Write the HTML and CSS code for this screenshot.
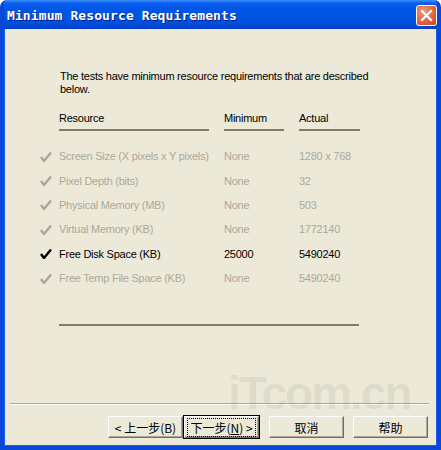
FILE: index.html
```html
<!DOCTYPE html>
<html lang="en">
<head>
  <meta charset="UTF-8">
  <title>Minimum Resource Requirements</title>
  <link rel="stylesheet" href="styles.css">
</head>
<body>
  <div class="window">
    <div class="titlebar">
      <span class="title">Minimum Resource Requirements</span>
      <button class="close-btn" aria-label="Close">
        <svg width="13" height="13" viewBox="0 0 13 13"><path d="M2 2 L11 11 M11 2 L2 11" stroke="#fff" stroke-width="2.2" stroke-linecap="square"/></svg>
      </button>
    </div>

    <div class="content">
      <p class="intro">The tests have minimum resource requirements that are described below.</p>

      <div class="grid head">
        <span></span>
        <span class="col-head wide">Resource</span>
        <span class="col-head mid">Minimum</span>
        <span class="col-head">Actual</span>
      </div>

      <div id="rows"></div>

      <div class="rule"></div>
    </div>

    <span class="watermark">iTcom.cn</span>

    <div class="separator"></div>
    <div class="footer">
      <button class="btn">&lt; 上一步(B)</button>
      <button class="btn default"><span class="focus">下一步(<u>N</u>) &gt;</span></button>
      <button class="btn gap">取消</button>
      <button class="btn gap-sm">帮助</button>
    </div>
  </div>

  <script>
    const resources = [
      { name: 'Screen Size (X pixels x Y pixels)', min: 'None', actual: '1280 x 768' },
      { name: 'Pixel Depth (bits)', min: 'None', actual: '32' },
      { name: 'Physical Memory (MB)', min: 'None', actual: '503' },
      { name: 'Virtual Memory (KB)', min: 'None', actual: '1772140' },
      { name: 'Free Disk Space (KB)', min: '25000', actual: '5490240', active: true },
      { name: 'Free Temp File Space (KB)', min: 'None', actual: '5490240' }
    ];

    const check = '<svg width="12" height="11" viewBox="0 0 12 11"><path d="M1 6 L4 10 L11 1.5" fill="none" stroke="currentColor" stroke-width="2.4" stroke-linejoin="round"/></svg>';

    const rows = document.getElementById('rows');
    resources.forEach(r => {
      const row = document.createElement('div');
      row.className = 'grid row' + (r.active ? ' active' : '');
      row.innerHTML = `<span class="check">${check}</span><span>${r.name}</span><span>${r.min}</span><span>${r.actual}</span>`;
      rows.appendChild(row);
    });
  </script>
</body>
</html>
```

FILE: styles.css
```css
body {
  margin: 0;
  background: #fff;
  font-family: "Liberation Sans", Arial, sans-serif;
  font-size: 11px;
  letter-spacing: -0.25px;
  color: #000;
}
.window {
  position: relative;
  width: 441px;
  height: 450px;
  box-sizing: border-box;
  display: flex;
  flex-direction: column;
  background: #ece9d8;
  border: 4px solid #0a47d8;
  border-top: 0;
  box-shadow: inset 1px 0 #1c5fe6, inset -1px 0 #1c5fe6, inset 0 -1px #1c5fe6;
  border-radius: 7px 7px 0 0;
  overflow: hidden;
}
.titlebar {
  height: 29px;
  margin: 0 -4px;
  display: flex;
  align-items: center;
  justify-content: space-between;
  padding: 0 4px 0 7px;
  border-radius: 7px 7px 0 0;
  background: linear-gradient(#3d8ff9 0, #0a5ff0 3px, #0056e6 8px, #0053e1 20px, #0249d6 26px, #003cc0 29px);
}
.title {
  font-family: "DejaVu Sans Mono", monospace;
  font-weight: bold;
  font-size: 13px;
  color: #fff;
  letter-spacing: 0.1px;
  text-shadow: 1px 1px #0a1e7a;
  padding-top: 1px;
}
.close-btn {
  width: 21px;
  height: 21px;
  padding: 0;
  margin-top: 2px;
  display: flex;
  align-items: center;
  justify-content: center;
  border: 1px solid #fff;
  border-radius: 3px;
  background: radial-gradient(circle at 35% 30%, #f09a7c, #e2643e 55%, #c8401c);
}
.content {
  flex: 1;
  padding: 41px 0 0 32px;
}
.intro {
  margin: 0 0 16px 24px;
  width: 320px;
  line-height: 13px;
}
.grid {
  display: grid;
  grid-template-columns: 23px 165px 75px 61px;
}
.head {
  margin-bottom: 13px;
}
.col-head {
  line-height: 13px;
  padding-bottom: 4px;
  border-bottom: 2px solid #7f7c6b;
}
.col-head.wide, .col-head.mid {
  margin-right: 15px;
}
.row {
  height: 24.4px;
  align-items: center;
  color: #aca899;
}
.row.active {
  color: #000;
}
.check {
  display: flex;
  align-items: center;
  padding-left: 4px;
}
.rule {
  margin: 34px 0 0 23px;
  width: 300px;
  border-top: 2px solid #7f7c6b;
}
.watermark {
  position: absolute;
  left: 224px;
  top: 366px;
  font: bold 46px "Liberation Sans", Arial, sans-serif;
  letter-spacing: -2px;
  color: rgba(150, 146, 130, 0.16);
}
.separator {
  margin: 0 8px 0 6px;
  border-top: 1px solid #aca899;
  border-bottom: 1px solid #fff;
}
.footer {
  position: relative;
  display: flex;
  justify-content: flex-end;
  padding: 11px 9px 8px 0;
}
.btn {
  width: 75px;
  height: 22px;
  padding: 0;
  margin-left: 1px;
  white-space: nowrap;
  font-family: "Noto Sans CJK SC", sans-serif;
  font-size: 12px;
  letter-spacing: 0;
  color: #000;
  background: #ece9d8;
  border: 1px solid;
  border-color: #fff #716f64 #716f64 #fff;
  box-shadow: inset -1px -1px #aca899;
}
.btn.gap {
  margin-left: 10px;
}
.btn.gap-sm {
  margin-left: 9px;
}
.btn.default {
  outline: 1px solid #000;
}
.focus {
  border: 1px dotted #000;
  padding: 0 2px;
}
```
